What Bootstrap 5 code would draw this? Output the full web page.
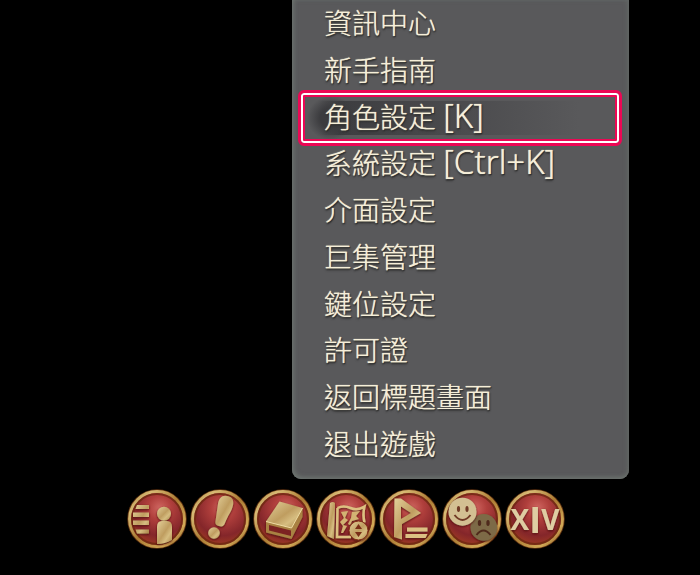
<!DOCTYPE html>
<html lang="zh-Hant">
<head>
<meta charset="utf-8">
<meta name="viewport" content="width=device-width, initial-scale=1">
<title>系統選單</title>
<link href="https://cdn.jsdelivr.net/npm/bootstrap@5.3.0/dist/css/bootstrap.min.css" rel="stylesheet">
<style>
body { background: #000; font-family: "Noto Sans", "Noto Sans CJK TC", sans-serif; }
.menu-area { padding: 0 71px 0 292px; }
.system-menu {
  min-height: 479px;
  padding: 0 7px 12px;
  background: #59595b;
  border-radius: 0 0 9px 9px;
  box-shadow: inset 2px -2px 4px #6c736f, inset -2px 0 4px #626664;
}
.menu-entry {
  padding: 0 0 0 25px;
  border: 0;
  background: none;
  color: #f6efd9;
  font-size: 28px;
  font-weight: 300;
  line-height: 36px;
  text-align: left;
  white-space: nowrap;
  text-shadow: 0 0 1px #f6efd9, 1px 1px 1px #222, 0 2px 2px #343434;
}
.menu-entry kbd { padding: 0; background: none; color: inherit; font-family: inherit; font-size: 33px; font-weight: 300; line-height: 32px; }
.menu-entry.current::before {
  content: "";
  position: absolute;
  inset: 0 3px -3px 2px;
  z-index: -1;
  border: 2px solid #fff;
  border-radius: 3px;
  outline: 3px solid #ec0754;
  box-shadow: inset 0 0 0 2px #ec0754;
  background: radial-gradient(ellipse 24px 22px at 28px 50%, #3b3b3e 45%, transparent 100%), linear-gradient(90deg, transparent 16px, #3d3d40 36px, #59595b 88%) center / 100% 34px no-repeat;
}
.menu-list { z-index: 0; }
.shortcut-bar { padding: 10px 0 0 127px; gap: 3px; }
.shortcut { width: 60px; height: 60px; border: 0; padding: 0; background: none; }
.shortcut svg { display: block; width: 100%; height: 100%; }
.emblem { font-family: "Open Sans", sans-serif; font-weight: 700; }
</style>
<script src="https://cdn.jsdelivr.net/npm/bootstrap@5.3.0/dist/js/bootstrap.bundle.min.js"></script>
</head>
<body>
<svg width="0" height="0" class="position-absolute" aria-hidden="true">
  <defs>
    <linearGradient id="rim" x1="0" y1="0" x2="1" y2="1"><stop offset="0" stop-color="#a8823e"/><stop offset=".2" stop-color="#d8ba74"/><stop offset=".5" stop-color="#ab7c34"/><stop offset=".8" stop-color="#d2a957"/><stop offset="1" stop-color="#7a4a18"/></linearGradient>
    <radialGradient id="ruby" cx=".55" cy=".3" r=".72"><stop offset="0" stop-color="#cf6660"/><stop offset=".3" stop-color="#b03f3c"/><stop offset=".7" stop-color="#84262a"/><stop offset="1" stop-color="#a23d22"/></radialGradient>
    <linearGradient id="gold" x1="0" y1="0" x2="1" y2="1"><stop offset="0" stop-color="#e3d09a"/><stop offset=".5" stop-color="#bf9d60"/><stop offset=".7" stop-color="#d6bd80"/><stop offset="1" stop-color="#a98448"/></linearGradient>
    <filter id="relief" x="-20%" y="-20%" width="140%" height="140%"><feDropShadow dx="0" dy="1" stdDeviation=".8" flood-color="#4c0f08" flood-opacity=".9"/></filter>
    <g id="medal">
      <circle cx="30" cy="30" r="29.8" fill="#5f3210"/>
      <circle cx="30" cy="30" r="27.4" fill="url(#ruby)" stroke="url(#rim)" stroke-width="3"/>
      <circle cx="30" cy="30" r="25" fill="none" stroke="#6d2810" stroke-width="2" opacity=".8"/>
    </g>
  </defs>
</svg>
<main>
  <div class="menu-area">
    <nav class="system-menu d-flex flex-column" aria-label="系統選單">
      <div class="menu-list position-relative d-flex flex-column flex-fill">
        <button type="button" class="menu-entry flex-fill">資訊中心</button>
        <button type="button" class="menu-entry flex-fill">新手指南</button>
        <button type="button" class="menu-entry current position-relative flex-fill">角色設定 <kbd>[K]</kbd></button>
        <button type="button" class="menu-entry flex-fill">系統設定 <kbd>[Ctrl+K]</kbd></button>
        <button type="button" class="menu-entry flex-fill">介面設定</button>
        <button type="button" class="menu-entry flex-fill">巨集管理</button>
        <button type="button" class="menu-entry flex-fill">鍵位設定</button>
        <button type="button" class="menu-entry flex-fill">許可證</button>
        <button type="button" class="menu-entry flex-fill">返回標題畫面</button>
        <button type="button" class="menu-entry flex-fill">退出遊戲</button>
      </div>
    </nav>
  </div>
  <div class="shortcut-bar d-flex">
    <button type="button" class="shortcut" aria-label="角色">
      <svg viewBox="0 0 60 60"><use href="#medal"/><g fill="url(#gold)" filter="url(#relief)"><path d="M10 16h12v4H8.500zM6 23.500h16v4.500H6zM6 31.500h16v4.500H6zM8.500 40.500H22v4H10z"/><circle cx="37" cy="24.700" r="7"/><path d="M30 54V38q0-6 5-6h5q5 0 5 6v13q-7 4-15 4z"/></g></svg>
    </button>
    <button type="button" class="shortcut" aria-label="任務">
      <svg viewBox="0 0 60 60"><use href="#medal"/><g fill="url(#gold)" filter="url(#relief)"><path d="M28 15c1-6 4-9 9-8 5 .5 7 4 6 9-1 6-5 10-8 18-1 3-3 4-6 3-3-.5-4-2-3.500-5z"/><circle cx="24" cy="44" r="5.800"/></g></svg>
    </button>
    <button type="button" class="shortcut" aria-label="記錄">
      <svg viewBox="0 0 60 60"><use href="#medal"/><g filter="url(#relief)"><path d="M13 32v11.500L38.500 50 49.500 28v-9z" fill="#a98143"/><path d="M16 36l22 5.500V47l-22-5.500z" fill="#7c2420"/><path d="M26.500 12.500L49.500 19l-11 20-25.500-6.500z" fill="url(#gold)"/><path d="M13 32.500L38.500 39l11-20" fill="none" stroke="#efdca3" stroke-width="1"/></g></svg>
    </button>
    <button type="button" class="shortcut" aria-label="地圖">
      <svg viewBox="0 0 60 60"><use href="#medal"/><g filter="url(#relief)"><path d="M14 14q3-2 5 0l-1 36-7-3z" fill="url(#gold)"/><path d="M21.500 19q6-3 13 0t14-1.500q-2 8 0 16M21.500 19l-.5 29h14" fill="none" stroke="#ddc081" stroke-width="2.500"/><path d="M25 23l7-1-3 7 3 2-5 5 4 1-4 7h-2l2-7-3-4 4-4zM36 23l8-1-4 5 3 3-7 2-2 4-2-1 3-6z" fill="#d3b373"/><circle cx="42.500" cy="41.500" r="9.500" fill="url(#gold)" stroke="#833018"/><path d="M42.500 35l3.500 5h-7zM42.500 48l-3.500-5h7z" fill="#792d19"/></g></svg>
    </button>
    <button type="button" class="shortcut" aria-label="隊伍">
      <svg viewBox="0 0 60 60"><use href="#medal"/><path d="M15.500 9.500H22L42 24 23 35v15.500L15 48zM22 17.500V30L32 24z" fill="url(#gold)" fill-rule="evenodd" filter="url(#relief)"/><path d="M28 38.500h20.500v4H28zM26.500 45h22l-2 4h-20z" fill="#dcc083" filter="url(#relief)"/></svg>
    </button>
    <button type="button" class="shortcut" aria-label="社交">
      <svg viewBox="0 0 60 60"><use href="#medal"/><g filter="url(#relief)"><circle cx="41.800" cy="38.400" r="13.300" fill="#7d6b46"/><g fill="#4f291b"><ellipse cx="37.500" cy="34" rx="1.700" ry="3"/><ellipse cx="46" cy="34" rx="1.700" ry="3"/></g><path d="M34.500 46q7-9 14 0" fill="none" stroke="#4f291b" stroke-width="2"/></g><g filter="url(#relief)"><circle cx="20.500" cy="22.700" r="14" fill="#d3c092"/><g fill="#713a25"><ellipse cx="16.500" cy="20" rx="1.600" ry="3"/><ellipse cx="25" cy="20" rx="1.600" ry="3"/></g><path d="M12.500 26q8 10 16 0" fill="none" stroke="#713a25" stroke-width="2"/></g></svg>
    </button>
    <button type="button" class="shortcut" aria-label="系統">
      <svg viewBox="0 0 60 60"><use href="#medal"/><text class="emblem" x="30" y="41" font-size="28" fill="#dfcda2" filter="url(#relief)" text-anchor="middle">X<tspan font-size="36" dy="3">I</tspan><tspan dy="-3">V</tspan></text></svg>
    </button>
  </div>
</main>
</body>
</html>
